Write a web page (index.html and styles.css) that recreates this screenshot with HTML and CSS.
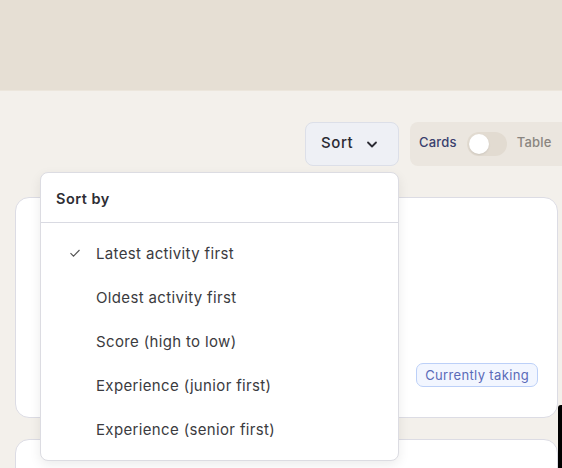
FILE: index.html
```html
<!DOCTYPE html>
<html lang="en">
<head>
  <meta charset="UTF-8" />
  <title>Candidates</title>
  <link rel="stylesheet" href="styles.css">
</head>
<body>
  <header class="topbar"></header>

  <main class="content">
    <div class="toolbar">
      <div class="sort-wrap">
        <button class="sort-btn"><span class="sort-label">Sort</span>
          <svg width="14" height="14" viewBox="0 0 14 14"><path d="M3 5.5l4 4 4-4" fill="none" stroke="#2b2b33" stroke-width="1.8" stroke-linecap="round" stroke-linejoin="round"/></svg>
        </button>
        <div class="menu">
          <div class="menu-title">Sort by</div>
          <ul class="menu-list">
            <li class="menu-item active"><span class="check">
              <svg width="12" height="10" viewBox="0 0 12 10"><path d="M1.5 5.2l3 3L10.5 2" fill="none" stroke="#555" stroke-width="1.1"/></svg>
            </span>Latest activity first</li>
            <li class="menu-item"><span class="check"></span>Oldest activity first</li>
            <li class="menu-item"><span class="check"></span>Score (high to low)</li>
            <li class="menu-item"><span class="check"></span>Experience (junior first)</li>
            <li class="menu-item"><span class="check"></span>Experience (senior first)</li>
          </ul>
        </div>
      </div>
      <div class="view-toggle">
        <span class="opt on">Cards</span>
        <span class="switch"><span class="knob"></span></span>
        <span class="opt">Table</span>
      </div>
    </div>

    <div class="card">
      <span class="badge">Currently taking</span>
    </div>
    <div class="card"></div>
  </main>

  <div class="edge"></div>
</body>
</html>
```
FILE: styles.css
```css
body {
  margin: 0;
  font-family: Inter, "Liberation Sans", sans-serif;
  background-color: #f3f0eb;
  color: #2b2b33;
  height: 468px;
  overflow: hidden;
  position: relative;
}

.topbar {
  height: 90px;
  background-color: #e6dfd4;
  border-bottom: 1px solid #ece6dc;
}

.content {
  padding: 31px 4px 0 15px;
}

.toolbar {
  display: flex;
  justify-content: flex-end;
  gap: 11px;
  margin-right: -13px;
  margin-bottom: 31px;
}

.sort-wrap {
  position: relative;
}

.sort-btn {
  display: flex;
  align-items: center;
  gap: 12px;
  width: 94px;
  height: 44px;
  padding: 0 0 0 15px;
  background-color: #eef0f5;
  border: 1px solid #dcdfe8;
  border-radius: 8px;
  font-family: inherit;
  font-size: 15px;
  font-weight: 500;
  letter-spacing: 0.6px;
  color: #2b2b33;
}

.sort-label {
  margin-bottom: 3px;
}

.menu {
  position: absolute;
  top: 50px;
  right: 0;
  width: 357px;
  background-color: #fff;
  border: 1px solid #dcdce2;
  border-radius: 8px;
  box-shadow: 0 4px 12px rgba(0, 0, 0, 0.08);
  z-index: 2;
}

.menu-title {
  height: 49px;
  line-height: 52px;
  padding-left: 15px;
  font-size: 14.5px;
  font-weight: 600;
  letter-spacing: 0.5px;
  color: #2d2d33;
  border-bottom: 1px solid #d9dae2;
}

.menu-list {
  list-style: none;
  margin: 0;
  padding: 8px 0 9px;
}

.menu-item {
  display: flex;
  align-items: center;
  height: 44px;
  padding-left: 28px;
  font-size: 15px;
  letter-spacing: 0.35px;
  color: #3b3b40;
}

.check {
  width: 27px;
  display: flex;
  align-items: center;
}

.view-toggle {
  display: flex;
  align-items: center;
  gap: 10px;
  width: 152px;
  height: 44px;
  padding: 0 0 0 9px;
  background-color: #ebe6df;
  border-radius: 8px;
  font-size: 13px;
  font-weight: 500;
  letter-spacing: 0.2px;
}

.opt {
  color: #8a8580;
  margin-bottom: 4px;
}

.opt.on {
  color: #3a3f6e;
}

.switch {
  width: 40px;
  height: 24px;
  border-radius: 12px;
  background-color: #e2dbd1;
  display: flex;
  align-items: center;
}

.knob {
  width: 20px;
  height: 20px;
  margin-left: 2px;
  border-radius: 50%;
  background-color: #fff;
  box-shadow: 0 1px 2px rgba(0, 0, 0, 0.1);
}

.card {
  height: 221px;
  background-color: #fff;
  border: 1px solid #dcdce4;
  border-radius: 14px;
  margin-bottom: 21px;
  display: flex;
  align-items: flex-end;
  justify-content: flex-end;
  padding: 0 19px 30px 0;
  box-sizing: border-box;
}

.badge {
  padding: 3px 8px;
  font-size: 13px;
  letter-spacing: 0.35px;
  color: #5a6ab8;
  background-color: #f2f6ff;
  border: 1px solid #bcd0f8;
  border-radius: 7px;
}

.edge {
  position: absolute;
  right: 0;
  top: 405px;
  width: 4px;
  height: 63px;
  background-color: #000;
  border-top-left-radius: 3px;
}
```
